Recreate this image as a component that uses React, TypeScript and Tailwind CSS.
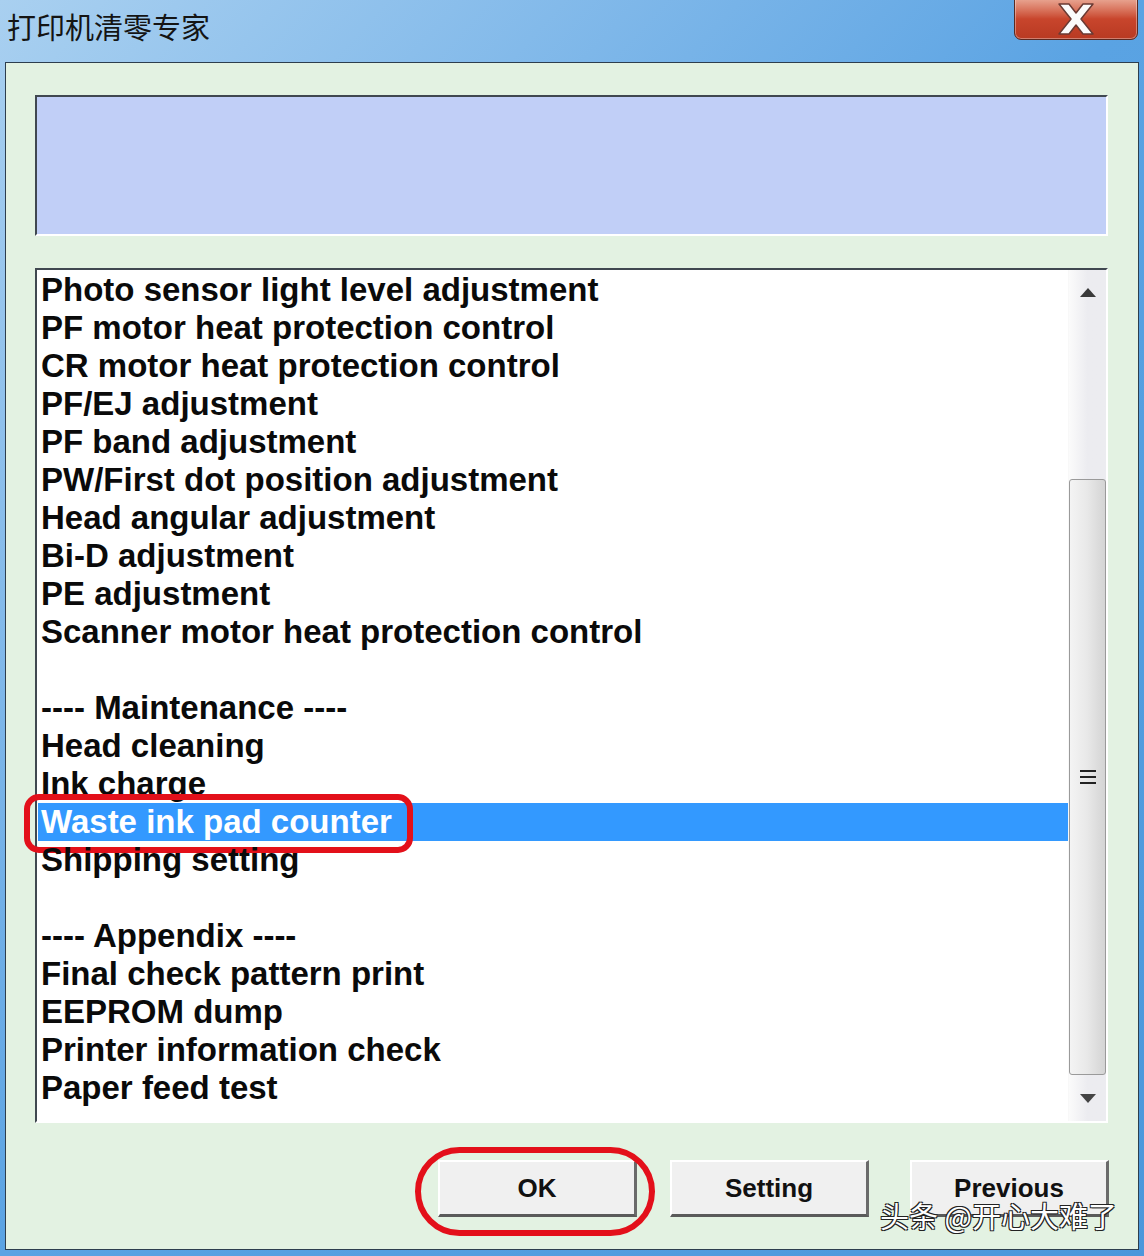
import React from 'react';

const items: string[] = [
  'Photo sensor light level adjustment',
  'PF motor heat protection control',
  'CR motor heat protection control',
  'PF/EJ adjustment',
  'PF band adjustment',
  'PW/First dot position adjustment',
  'Head angular adjustment',
  'Bi-D adjustment',
  'PE adjustment',
  'Scanner motor heat protection control',
  '',
  '---- Maintenance ----',
  'Head cleaning',
  'Ink charge',
  'Waste ink pad counter',
  'Shipping setting',
  '',
  '---- Appendix ----',
  'Final check pattern print',
  'EEPROM dump',
  'Printer information check',
  'Paper feed test',
];

function CloseButton() {
  return (
    <div className="mt-[-2px] mr-[6px] w-[124px] h-[42px] rounded-b-[7px] border border-[#5a2a22] bg-gradient-to-b from-[#e8a592] via-[#c8452c] to-[#b83a22] flex items-center justify-center shadow-[inset_0_0_0_1px_rgba(255,255,255,0.35)]">
      <svg width="44" height="34" viewBox="0 0 44 34">
        <path d="M5 2 L15 2 L22 11 L29 2 L39 2 L27 17 L39 32 L29 32 L22 23 L15 32 L5 32 L17 17 Z" fill="#fbfbfb" stroke="#6b3a33" strokeWidth="1.5" strokeLinejoin="round" />
      </svg>
    </div>
  );
}

function WinButton({ label }: { label: string }) {
  return (
    <div className="w-[199px] h-[57px] bg-[#f0f0f0] border-t-2 border-l-2 border-t-white border-l-white border-r-[3px] border-b-[3px] border-r-[#6a6a6a] border-b-[#5a5a5a] flex items-center justify-center text-[26px] font-bold text-[#111] font-['Liberation_Sans',Arial,sans-serif]">
      {label}
    </div>
  );
}

function ScrollBar() {
  return (
    <div className="w-[38px] h-full bg-gradient-to-r from-[#fbfbfb] via-[#ececf0] to-[#ececf0] border-l border-[#f8f8f8] flex flex-col items-center">
      <div className="h-[44px] w-full flex items-center justify-center">
        <svg width="16" height="9" viewBox="0 0 16 9">
          <path d="M8 0 L16 9 L0 9 Z" fill="#3a3a3a" />
        </svg>
      </div>
      <div className="h-[165px]" />
      <div className="w-[37px] h-[596px] rounded-[3px] border border-[#9a9a9a] bg-gradient-to-r from-[#f4f4f4] via-[#e8e8e8] to-[#d4d4d4] flex items-center justify-center">
        <svg width="18" height="18" viewBox="0 0 18 18">
          <path d="M1 3 H17 M1 9 H17 M1 15 H17" stroke="#222" strokeWidth="2.2" />
        </svg>
      </div>
      <div className="flex-1 w-full flex items-center justify-center">
        <svg width="16" height="9" viewBox="0 0 16 9">
          <path d="M0 0 L16 0 L8 9 Z" fill="#444" />
        </svg>
      </div>
    </div>
  );
}

export default function App() {
  return (
    <div className="relative w-[1144px] h-[1256px] bg-gradient-to-br from-[#a9d0f0] via-[#5aa3e3] to-[#4b97db] flex flex-col overflow-hidden">
      {/* title bar */}
      <div className="h-[62px] flex items-start justify-between">
        <div className="pl-[7px] pt-[6px] text-[29px] text-[#141414] font-['Noto_Sans_CJK_SC',sans-serif] leading-[40px]">
          打印机清零专家
        </div>
        <CloseButton />
      </div>

      {/* client area */}
      <div className="ml-[5px] mr-[5px] h-[1188px] bg-[#e3f2e2] border border-[#2d3e4e] flex flex-col pl-[29px] pr-[30px] pt-[32px]">
        <div className="h-[141px] bg-[#c1cff7] border-t-2 border-l-2 border-[#404850] border-b-2 border-r-2 border-b-white border-r-white" />

        <div className="mt-[32px] h-[855px] bg-white border-t-2 border-l-2 border-[#404850] border-b-2 border-r-2 border-b-white border-r-white flex">
          <div className="flex-1 pl-[1px] pt-[1px]">
            {items.map((it, i) => {
              const sel = it === 'Waste ink pad counter';
              return (
                <div
                  key={i}
                  className={`relative h-[38px] leading-[38px] pl-[3px] text-[33px] font-bold whitespace-nowrap font-['Liberation_Sans',Arial,sans-serif] ${sel ? 'bg-[#3399ff] text-white' : 'text-[#0a0a0a]'}`}
                >
                  {it}
                  {sel && (
                    <div className="absolute left-[-14px] top-[-9px] w-[389px] h-[59px] rounded-[15px] border-[6px] border-[#e3101a]" />
                  )}
                </div>
              );
            })}
          </div>
          <ScrollBar />
        </div>

        <div className="mt-[37px] flex items-start">
          <div className="ml-[403px] relative">
            <WinButton label="OK" />
            <div className="absolute left-[-23px] top-[-13px] w-[240px] h-[89px] rounded-[45px] border-[6px] border-[#e3101a]" />
          </div>
          <div className="ml-[33px]">
            <WinButton label="Setting" />
          </div>
          <div className="ml-[41px] relative">
            <WinButton label="Previous" />
          </div>
        </div>
      </div>

      {/* watermark */}
      <div className="absolute left-[880px] top-[1196px] text-[29px] text-white font-['Noto_Sans_CJK_SC',sans-serif] leading-[38px] [text-shadow:1px_1px_0_#222,-1px_-1px_0_#222,1px_-1px_0_#222,-1px_1px_0_#222]">
        头条 @开心大难了
      </div>
    </div>
  );
}
